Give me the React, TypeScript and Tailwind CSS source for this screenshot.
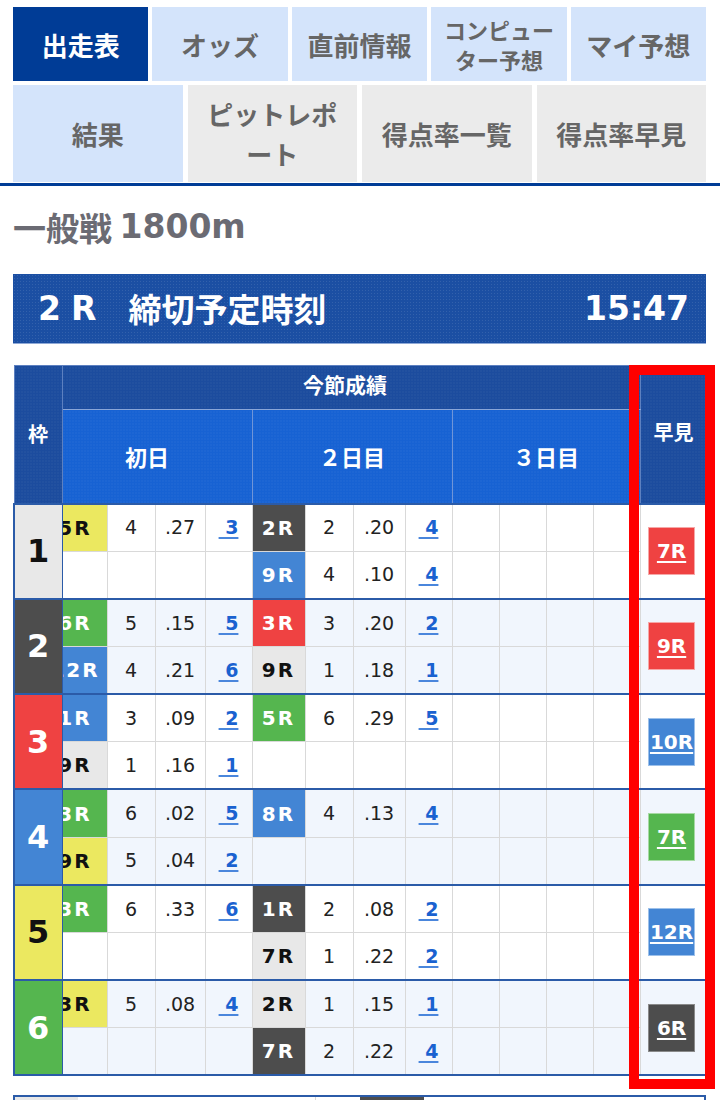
import React from "react";

type ColorKey = "w" | "k" | "r" | "b" | "y" | "g";

const COLORS: Record<ColorKey, string> = {
  w: "bg-[#e8e8e8] text-[#111]",
  k: "bg-[#4d4d4d] text-white",
  r: "bg-[#ef4242] text-white",
  b: "bg-[#4385d4] text-white",
  y: "bg-[#ebe860] text-[#111]",
  g: "bg-[#55b64f] text-white",
};

const BADGE_BORDER: Record<ColorKey, string> = {
  w: "border-[#f4f4f4]",
  k: "border-[#8a8a8a]",
  r: "border-[#f6a7a7]",
  b: "border-[#9cc0ea]",
  y: "border-[#f5f3b0]",
  g: "border-[#a6d9a3]",
};

type Entry = { race: string; c: ColorKey; rank: string; st: string; course: string } | null;

type Frame = {
  n: number;
  c: ColorKey;
  d1: [Entry, Entry];
  d2: [Entry, Entry];
  h: { race: string; c: ColorKey };
};

const e = (race: string, c: ColorKey, rank: string, st: string, course: string): Entry => ({
  race,
  c,
  rank,
  st,
  course,
});

const FRAMES: Frame[] = [
  { n: 1, c: "w", d1: [e("5R", "y", "4", ".27", "3"), null], d2: [e("2R", "k", "2", ".20", "4"), e("9R", "b", "4", ".10", "4")], h: { race: "7R", c: "r" } },
  { n: 2, c: "k", d1: [e("6R", "g", "5", ".15", "5"), e("12R", "b", "4", ".21", "6")], d2: [e("3R", "r", "3", ".20", "2"), e("9R", "w", "1", ".18", "1")], h: { race: "9R", c: "r" } },
  { n: 3, c: "r", d1: [e("1R", "b", "3", ".09", "2"), e("9R", "w", "1", ".16", "1")], d2: [e("5R", "g", "6", ".29", "5"), null], h: { race: "10R", c: "b" } },
  { n: 4, c: "b", d1: [e("3R", "g", "6", ".02", "5"), e("9R", "y", "5", ".04", "2")], d2: [e("8R", "b", "4", ".13", "4"), null], h: { race: "7R", c: "g" } },
  { n: 5, c: "y", d1: [e("3R", "g", "6", ".33", "6"), null], d2: [e("1R", "k", "2", ".08", "2"), e("7R", "w", "1", ".22", "2")], h: { race: "12R", c: "b" } },
  { n: 6, c: "g", d1: [e("3R", "y", "5", ".08", "4"), null], d2: [e("2R", "w", "1", ".15", "1"), e("7R", "k", "2", ".22", "4")], h: { race: "6R", c: "k" } },
];

const JP = "font-['Noto_Sans_CJK_JP','Noto_Sans',sans-serif]";
const NUM = "font-['DejaVu_Sans','Noto_Sans_CJK_JP',sans-serif]";
const PATTERN = "bg-[radial-gradient(rgba(255,255,255,0.10)_1px,transparent_1px)] bg-[length:3px_3px]";

function DayCells({ entry, first, clip }: { entry: Entry; first: boolean; clip: boolean }) {
  const top = first ? "border-t-2 border-t-[#2b5ba8]" : "";
  const base = `border border-[#d9d9d9] ${top} p-0 h-[47.67px] text-center align-middle`;
  if (!entry) {
    return (
      <>
        <td className={base} />
        <td className={base} />
        <td className={base} />
        <td className={base} />
      </>
    );
  }
  return (
    <>
      <td className={`${base} ${COLORS[entry.c]}`}>
        {clip ? (
          <div className="overflow-hidden w-full">
            <div className="w-[65px] ml-[-20px] text-center">
              <span className={`${NUM} font-bold text-[20px] tracking-[2px] whitespace-nowrap`}>{entry.race}</span>
            </div>
          </div>
        ) : (
          <span className={`${NUM} font-bold text-[20px] tracking-[2px] whitespace-nowrap`}>{entry.race}</span>
        )}
      </td>
      <td className={`${base} ${NUM} text-[19px] text-[#222]`}>{entry.rank}</td>
      <td className={`${base} ${NUM} text-[19px] text-[#222]`}>{entry.st}</td>
      <td className={base}>
        <span className={`${NUM} text-[19px] font-bold text-[#1a62d0] underline underline-offset-[3px] decoration-[2px] decoration-[#4a86dc]`}>
          {"\u00a0" + entry.course}
        </span>
      </td>
    </>
  );
}

function EmptyDay({ first }: { first: boolean }) {
  const top = first ? "border-t-2 border-t-[#2b5ba8]" : "";
  const base = `border border-[#d9d9d9] ${top} p-0 h-[47.67px]`;
  return (
    <>
      <td className={base} />
      <td className={base} />
      <td className={base} />
      <td className={base} />
    </>
  );
}

export default function App() {
  return (
    <div className={`w-[720px] min-h-[1100px] bg-white ${JP} overflow-hidden`}>
      {/* Tabs */}
      <div className="pt-[7px] pl-[13px] pr-[14px] pb-[1px] flex flex-col gap-[4px]">
        <div className="grid grid-cols-5 gap-[4px] h-[74px]">
          <div className="bg-[#003c96] text-white font-bold text-[26px] flex items-center justify-center">出走表</div>
          <div className="bg-[#d4e4fb] text-[#666] font-bold text-[26px] flex items-center justify-center">オッズ</div>
          <div className="bg-[#d4e4fb] text-[#666] font-bold text-[26px] flex items-center justify-center">直前情報</div>
          <div className="bg-[#d4e4fb] text-[#666] font-bold text-[22px] leading-[30px] flex items-center justify-center text-center">
            コンピュー<br />ター予想
          </div>
          <div className="bg-[#d4e4fb] text-[#666] font-bold text-[26px] flex items-center justify-center">マイ予想</div>
        </div>
        <div className="grid grid-cols-4 gap-[5px] h-[97px]">
          <div className="bg-[#d4e4fb] text-[#666] font-bold text-[26px] flex items-center justify-center">結果</div>
          <div className="bg-[#ebebeb] text-[#666] font-bold text-[26px] leading-[40px] flex items-center justify-center text-center">
            ピットレポ<br />ート
          </div>
          <div className="bg-[#ebebeb] text-[#666] font-bold text-[26px] flex items-center justify-center">得点率一覧</div>
          <div className="bg-[#ebebeb] text-[#666] font-bold text-[26px] flex items-center justify-center">得点率早見</div>
        </div>
      </div>
      <div className="h-[3px] bg-[#003c96]" />

      {/* Title */}
      <h1 className="mt-[21px] ml-[13px] h-[40px] flex items-center text-[33px] leading-[40px] font-bold text-[#6b6b73] whitespace-pre">
        <span>一般戦 </span>
        <span className={NUM}>1800m</span>
      </h1>

      {/* Race bar */}
      <div className={`mt-[27px] ml-[13px] mr-[14px] h-[70px] bg-[#1b4fa3] ${PATTERN} border-b border-b-[#8fa9d6] flex items-center justify-between pl-[25px] pr-[17px] text-white font-bold text-[33px]`}>
        <span className="flex items-center">
          <span className={`${NUM} tracking-[10px]`}>2R</span>
          <span className="ml-[22px]">締切予定時刻</span>
        </span>
        <span className={NUM}>15:47</span>
      </div>

      {/* Table */}
      <div className="relative mt-[21px] ml-[13px] mr-[14px]">
        <table className="w-[693px] table-fixed border-collapse">
          <colgroup>
            <col className="w-[48px]" />
            <col className="w-[45px]" />
            <col className="w-[48px]" />
            <col className="w-[50px]" />
            <col className="w-[47px]" />
            <col className="w-[53px]" />
            <col className="w-[48px]" />
            <col className="w-[52px]" />
            <col className="w-[47px]" />
            <col className="w-[47px]" />
            <col className="w-[47px]" />
            <col className="w-[47px]" />
            <col className="w-[47px]" />
            <col className="w-[67px]" />
          </colgroup>
          <thead>
            <tr>
              <th rowSpan={2} className={`bg-[#1c4c9e] ${PATTERN} text-white font-bold text-[20px] border border-[#5d80c0] p-0`}>
                枠
              </th>
              <th colSpan={12} className={`h-[44px] bg-[#1c4c9e] ${PATTERN} text-white font-bold text-[21px] border border-[#5d80c0] border-b-[#8aa6d8] p-0 align-middle`}>
                <span className="relative top-[-3px] left-[-6px]">今節成績</span>
              </th>
              <th rowSpan={2} className={`bg-[#1c4c9e] ${PATTERN} text-white font-bold text-[20px] border border-[#5d80c0] p-0`}>
                <span className="relative top-[-2px]">早見</span>
              </th>
            </tr>
            <tr>
              <th colSpan={4} className={`h-[94px] bg-[#1762d3] ${PATTERN} text-white font-bold text-[22px] border border-[#6f95d8] p-0 pr-[20px]`}>
                初日
              </th>
              <th colSpan={4} className={`bg-[#1762d3] ${PATTERN} text-white font-bold text-[22px] border border-[#6f95d8] p-0`}>
                ２日目
              </th>
              <th colSpan={4} className={`bg-[#1762d3] ${PATTERN} text-white font-bold text-[22px] border border-[#6f95d8] p-0`}>
                ３日目
              </th>
            </tr>
          </thead>
          <tbody>
            {FRAMES.map((f, i) => {
              const rowBg = i % 2 === 0 ? "bg-white" : "bg-[#f1f6fd]";
              return (
                <React.Fragment key={f.n}>
                  <tr className={rowBg}>
                    <td
                      rowSpan={2}
                      className={`${COLORS[f.c]} border border-[#2b5ba8] border-t-2 border-l-2 p-0 text-center align-middle ${NUM} font-bold text-[32px]`}
                    >
                      {f.n}
                    </td>
                    <DayCells entry={f.d1[0]} first clip />
                    <DayCells entry={f.d2[0]} first clip={false} />
                    <EmptyDay first />
                    <td rowSpan={2} className="border border-[#d9d9d9] border-t-2 border-t-[#2b5ba8] p-0 text-center align-middle">
                      <span
                        className={`inline-flex items-center justify-center w-[47px] h-[48px] border ${BADGE_BORDER[f.h.c]} ${COLORS[f.h.c]} text-white ${NUM} font-bold text-[20px] underline underline-offset-[3px] decoration-[2px] ml-[-4px]`}
                      >
                        {f.h.race}
                      </span>
                    </td>
                  </tr>
                  <tr className={rowBg}>
                    <DayCells entry={f.d1[1]} first={false} clip />
                    <DayCells entry={f.d2[1]} first={false} clip={false} />
                    <EmptyDay first={false} />
                  </tr>
                </React.Fragment>
              );
            })}
            <tr>
              <td colSpan={14} className="p-0 h-0 border-t-2 border-t-[#2b5ba8]" />
            </tr>
          </tbody>
        </table>

        {/* Red highlight overlay */}
        <div className="absolute left-[616px] top-0 w-[86px] h-[724px] border-[10px] border-[#ff0000] pointer-events-none" />

        {/* Next table start */}
        <div className="mt-[19px] border-t-2 border-x-2 border-[#2b5ba8] h-[10px] flex">
          <div className="w-[63px] bg-[#e8e8e8]" />
          <div className="w-[238px] border-r border-[#d9d9d9]" />
          <div className="w-[44px]" />
          <div className="w-[64px] bg-[#4d4d4d]" />
          <div className="flex-1" />
        </div>
      </div>
    </div>
  );
}
